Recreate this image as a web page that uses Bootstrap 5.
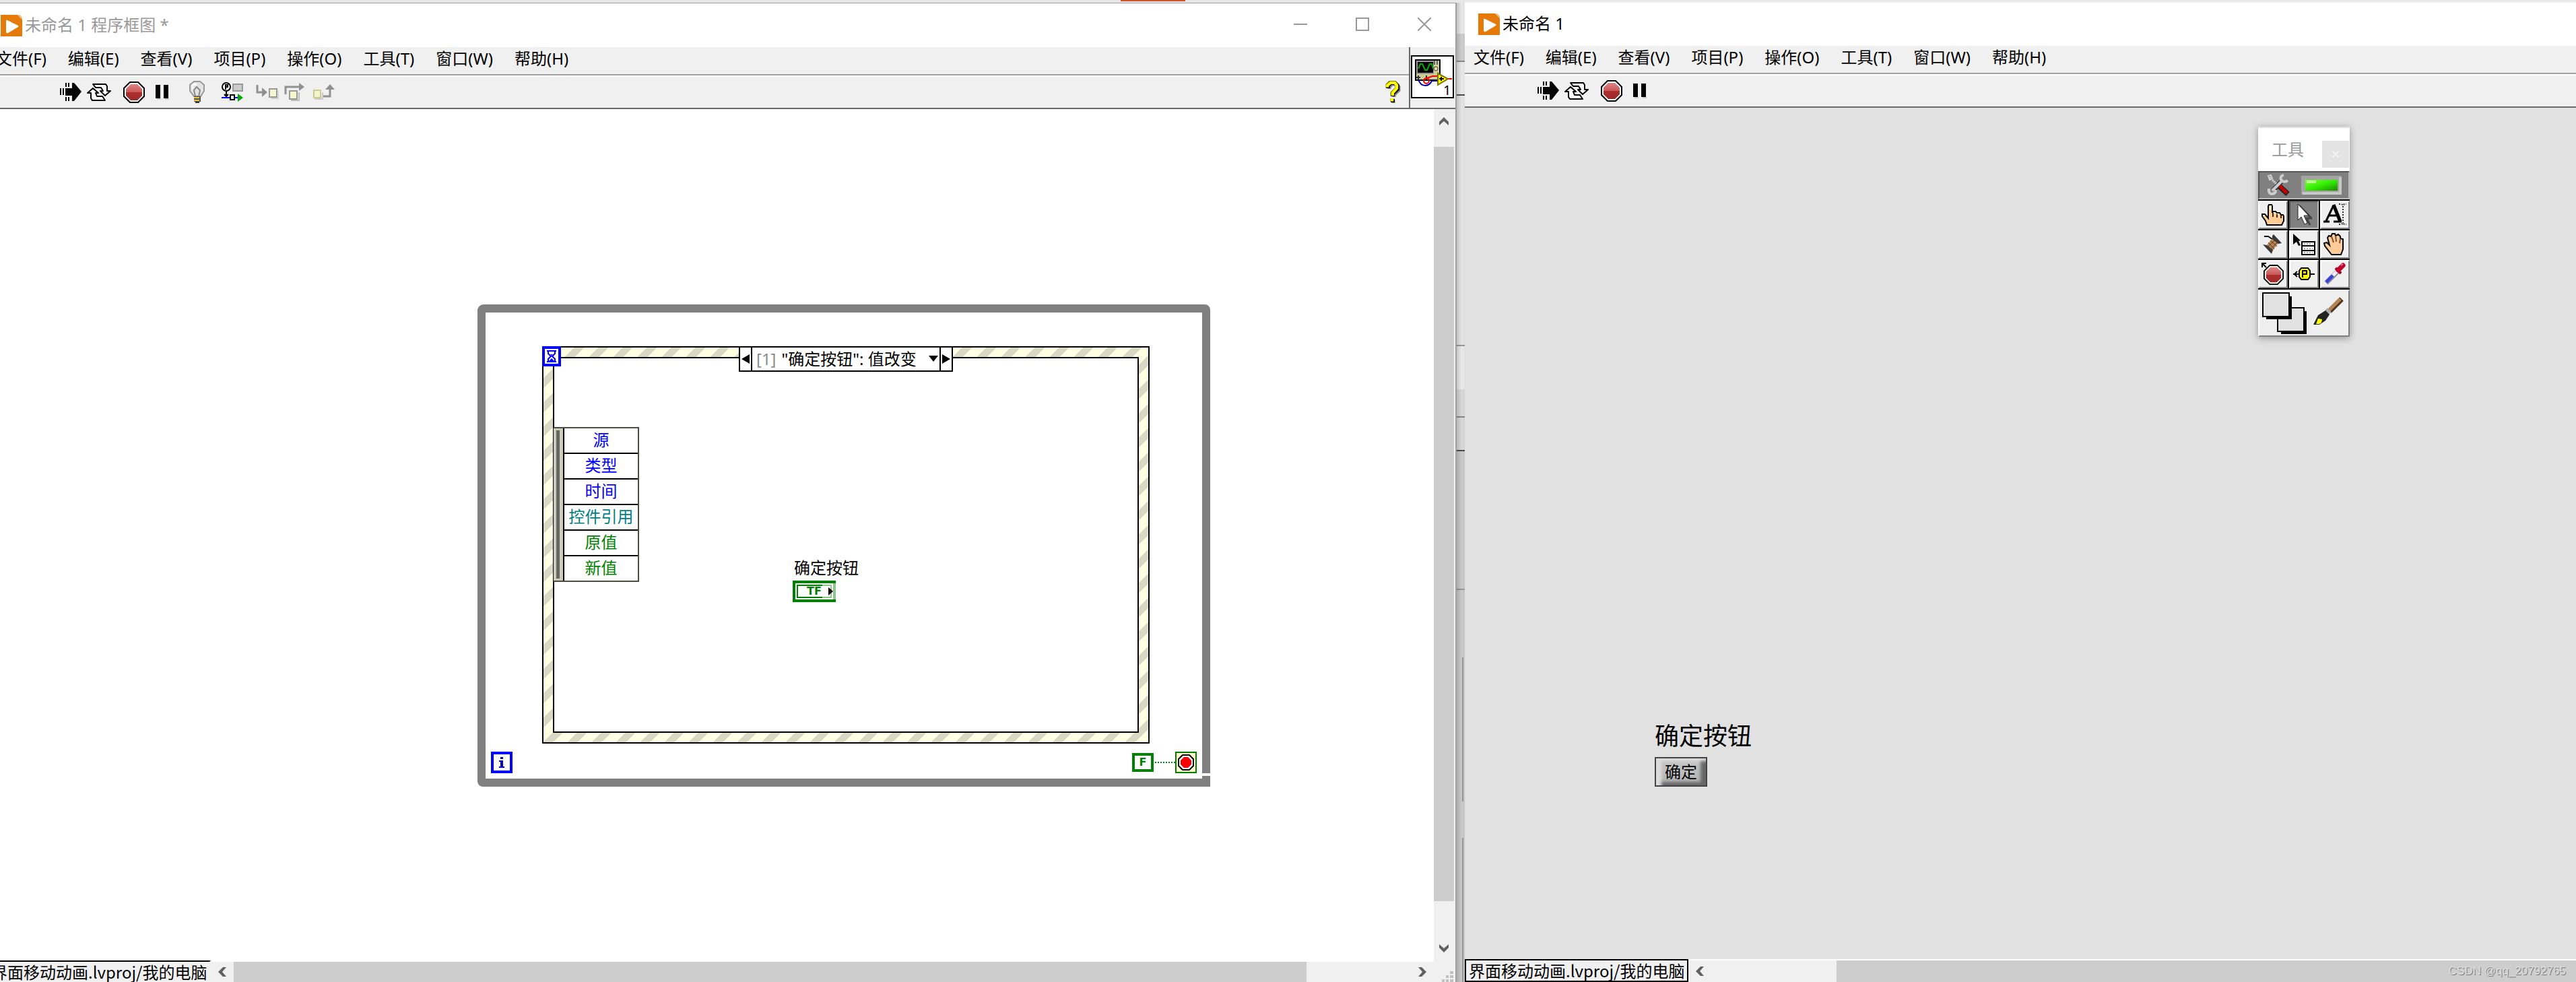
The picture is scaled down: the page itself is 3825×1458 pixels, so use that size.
<!DOCTYPE html>
<html lang="zh-CN">
<head>
<meta charset="utf-8">
<meta name="viewport" content="width=device-width, initial-scale=1">
<title>未命名 1 程序框图</title>
<link href="https://cdn.jsdelivr.net/npm/bootstrap@5.3.0/dist/css/bootstrap.min.css" rel="stylesheet">
<style>
  body { font-family: "Noto Sans", "Noto Sans CJK SC", sans-serif; font-size: 24px; line-height: 32px; color: #000; background: #e8e8e8; }
  button, select { font: inherit; color: inherit; border: 0; padding: 0; background: none; border-radius: 0; }
  svg { display: block; flex: none; }
  .desk-accent { left: 1664px; top: 0; width: 96px; height: 2px; background: #cd5527; }

  .win-diagram { flex: 2180 1 0; margin: 4px 0 0 -19px; border-top: 1px solid #a0a0a0; border-right: 2px solid #a0a0a0; background: #fff; }
  .win-panel { flex: 1650 1 0; margin-top: 2px; border-top: 2px solid #f0f0f0; background: #e1e1e1; }
  .win-title { height: 64px; background: #fff; padding-left: 20px; }
  .win-diagram .win-title { height: 65px; color: #999; }
  .win-title .app-name { margin-left: 4px; padding-bottom: 2px; }
  .win-ctl { width: 92px; height: 62px; color: #999; }
  .bar-zone { background: #f0f0f0; border-bottom: 2px solid #696969; }
  .menu-line { height: 42px; border-bottom: 2px solid #a0a0a0; padding: 0 13px; gap: 32px; }
  .menu-line a { color: #000; text-decoration: none; line-height: 34px; }
  .tool-line { height: 48px; border-top: 2px solid #fff; padding: 0 0 0 104px; gap: 12px; }
  .tool-set { display: flex; gap: 2px; }
  .tool-btn { width: 40px; height: 44px; display: flex; align-items: center; justify-content: center; }
  .vi-pane { width: 69px; border-left: 2px solid #696969; padding: 12px 1px 0 1px; }
  .vi-icon { width: 64px; height: 64px; }

  .scroll-v { width: 32px; background: #f0f0f0; }
  .scroll-v button { width: 30px; height: 36px; }
  .thumb-v { width: 30px; background: #cdcdcd; margin: 20px 0 52px; }
  .scroll-arrow { display: flex; align-items: center; justify-content: center; }
  .foot-line { background: #f0f0f0; }
  .win-diagram .foot-line { height: 32px; }
  .win-panel .foot-line { height: 34px; }
  .proj-path { border: 2px solid #000; background: #f0f0f0; font-family: "Noto Sans CJK SC", sans-serif; line-height: 30px; padding: 0 4px; height: 34px; }
  .win-diagram .proj-path { border-right-color: #f0f0f0; }
  .scroll-h { border-top: 2px solid #fff; }
  .scroll-h button { width: 34px; }
  .thumb-h { background: #cdcdcd; }
  .grip-corner { width: 32px; }

  .seam { flex: 0 0 12px; background:
      linear-gradient(90deg, rgba(0,0,0,.2), rgba(0,0,0,.05) 60%, rgba(0,0,0,.08)),
      linear-gradient(transparent 0 972px, #9ca09e 972px 1186px, transparent 1186px 1240px, #9ca09e 1240px) 8px 0 / 2px 100% no-repeat,
      linear-gradient(#f4f4f4 0 46px, #d8d8d8 46px 86px, #909090 86px 88px, #f4f4f4 88px 136px, #505050 136px 138px, #f0f0f0 138px 508px, #a0a0a0 508px 510px, #f6f6f6 510px 574px, #e4e4e4 574px 614px, #909090 614px 616px, #e4e4e4 616px 664px, #505050 664px 666px, #d4d4d4 666px 870px, #a0a0a0 870px 872px, #d4d4d4 872px); }

  .while-loop { left: 728px; top: 290px; width: 1088px; height: 716px; border: 12px solid #808080; border-radius: 9px 8px 0 8px; }
  .loop-notch { right: -12px; bottom: 4px; width: 14px; height: 4px; background: #fff; }
  .loop-index { left: 8px; bottom: 8px; }
  .loop-stop { right: 8px; bottom: 8px; }
  .const-f { width: 32px; height: 28px; border: 4px solid #008000; color: #008000; font: bold 16px/20px "DejaVu Sans", sans-serif; text-align: center; }
  .wire-dots { width: 32px; height: 2px; background: repeating-linear-gradient(90deg, #fff 0 2px, #008000 2px 4px); }
  .index-i { width: 32px; height: 32px; border: 4px solid #00f; }
  .stop-term { width: 32px; height: 32px; border: 2px solid #008000; background: #ffffcc; }

  .event-frame { left: 84px; top: 50px; width: 902px; height: 590px; border: 2px solid #000; padding: 14px;
    background: linear-gradient(135deg, #d8d8c4 0 22%, #ffffe4 22% 50%, #d8d8c4 50% 72%, #ffffe4 72%) 9px 0 / 36px 36px; }
  .event-body { border: 2px solid #000; background: #fff; }
  .hourglass { left: -2px; top: -2px; width: 28px; height: 30px; border: 4px solid #00f; background: #fff; }
  .case-bar { left: 290px; top: -2px; width: 318px; height: 38px; border: 2px solid #000; background: #fff; }
  .case-bar .case-step { width: 16px; }
  .case-bar .case-mid { border: solid #000; border-width: 0 2px; padding: 0 4px 0 6px; }
  .case-no { color: #8c8c8c; margin-right: 8px; }
  .case-mid select { appearance: none; -webkit-appearance: none; outline: 0; height: 32px; }
  .case-caret { right: 2px; top: 12px; pointer-events: none; }
  .event-data { left: 15px; top: 118px; height: 230px; width: 127px; border: 2px solid #4c4c40; border-left: 0; background: #fff; }
  .data-rail { width: 16px; background: #ccccb8; border-right: 2px solid #000; padding: 3px 5px 3px 4px; }
  .data-rail div { background: #666; }
  .event-data li { border-bottom: 2px solid #000; line-height: 34px; text-align: center; flex: 1 1 0; }
  .event-data li:last-child { border-bottom: 0; }
  .c-blue { color: #00f; } .c-teal { color: #008080; } .c-green { color: #008000; }
  .btn-node { left: 370px; top: 311px; }
  .btn-node .node-name { padding-left: 2px; }
  .tf-term { width: 64px; height: 32px; margin-top: 3px; border: 4px solid #008000; padding: 2px; }
  .tf-term .tf-in { border: 2px solid #008000; color: #008000; font: bold 16px/16px "DejaVu Sans", sans-serif; padding-left: 13px; height: 20px; }
  .tf-veil { right: -4px; top: 0; width: 20px; height: 24px; background: rgba(255,255,255,.55); }
  .tf-arrow { right: 0; top: 6px; }

  .ok-ctl { left: 282px; top: 911px; }
  .ok-ctl label { font-size: 36px; line-height: 44px; }
  .ok-btn { width: 78px; height: 44px; margin-top: 9px; border: 2px solid #444; background: linear-gradient(#c8c8c8, #b0b0b0); box-shadow: inset 8px 4px 4px #dcdcdc, inset -8px -5px 4px #686868; line-height: 40px; }

  .palette { right: 336px; top: 28px; width: 136px; background: #efefef; box-shadow: 0 2px 10px rgba(0,0,0,.35); }
  .pal-title { height: 66px; background: #fff; border-top: 2px solid #e0e0e0; color: #999; padding: 0 1px 0 20px; }
  .pal-close { width: 40px; height: 40px; background: #e3e3e3; margin-top: 19px; }
  .pal-auto { height: 42px; background: #808080; border: 2px solid; border-color: #555 #bbb #bbb #555; padding: 0 10px; }
  .pal-grid { display: grid; grid-template-columns: repeat(3, 1fr); gap: 2px; background: #000; padding: 2px 0; }
  .pal-grid button { height: 42px; background: #efefef; border: 2px solid; border-color: #fff #808080 #808080 #fff; display: flex; align-items: center; justify-content: center; }
  .pal-grid button.on { background: #808080; border-color: #555 #bbb #bbb #555; }
  .pal-color { height: 70px; border: 2px solid; border-color: #fff #808080 #808080 #fff; }
  .csdn { right: 15px; bottom: 6px; font: 17px/20px "Liberation Sans", Arial, sans-serif; color: #dedede; text-shadow: 1px 1px 0 #777; }
</style>
<script src="https://cdn.jsdelivr.net/npm/bootstrap@5.3.0/dist/js/bootstrap.bundle.min.js"></script>
</head>
<body class="vh-100 overflow-hidden position-relative">

<!-- shared symbols -->
<svg width="0" height="0" class="position-absolute" aria-hidden="true">
  <defs>
    <linearGradient id="gRed" x1="0" y1="0" x2="0" y2="1"><stop offset="0" stop-color="#e08484"/><stop offset=".5" stop-color="#c85858"/><stop offset=".5" stop-color="#b02c2c"/><stop offset="1" stop-color="#9c2c2c"/></linearGradient>
    <linearGradient id="gLed" x1="0" y1="0" x2="1" y2="1"><stop offset="0" stop-color="#7dff3a"/><stop offset=".5" stop-color="#33ee00"/><stop offset="1" stop-color="#1f8a00"/></linearGradient>
    <symbol id="lv" viewBox="0 0 32 32"><path fill="#e67a08" d="M0 0h25l7 7v25H0z"/><path fill="#f0b880" d="M25 0l7 7V4L28 0z"/><path fill="#fff" d="M8 9q0-2 2-1l16 8q1 1 0 2l-15 9q-3 1-3-2z"/></symbol>
    <symbol id="run" viewBox="0 0 32 28"><path d="M8 8h10V0h3l11 13-11 14h-3v-8H8z"/><path d="M0 8h2v10H0zM4 8h2v10H4zM8 0h2v6H8zM12 0h2v6h-2zM8 21h2v6H8zM12 21h2v6h-2z"/></symbol>
    <symbol id="loopy" viewBox="0 0 36 28"><g fill="#fff" stroke="#000" stroke-width="2" stroke-linejoin="round"><path d="M9 2h19l2 3v7h5l-8 7-7-7h4l-3-5h-8z"/><path d="M27 26H8l-2-3v-8H1l8-7 8 7h-4l2 5h8z"/></g></symbol>
    <symbol id="stop" viewBox="0 0 32 32"><path fill="#fff" stroke="#000" stroke-width="2" d="M10 1h12l9 9v12l-9 9H10l-9-9V10z"/><path fill="url(#gRed)" d="M11 4h10l7 7v10l-7 7H11l-7-7V11z"/></symbol>
    <symbol id="pause" viewBox="0 0 20 22"><path fill="#ccc" d="M2 20h6v2H2zM14 20h6v2h-6z"/><path d="M0 0h7v20H0zM12 0h7v20h-7z"/></symbol>
    <symbol id="chev" viewBox="0 0 14 12"><path fill="#606060" d="M7 0l7 7v5L7 6 0 12V7z"/></symbol>
  </defs>
</svg>

<div class="desk-accent position-absolute"></div>

<div class="d-flex h-100">

  <!-- block diagram window -->
  <section class="win-diagram d-flex flex-column">
    <header class="win-title d-flex align-items-center">
      <svg width="32" height="32"><use href="#lv"/></svg>
      <span class="app-name text-nowrap">未命名 1 程序框图 *</span>
      <div class="ms-auto d-flex align-self-start">
        <button class="win-ctl scroll-arrow" aria-label="最小化"><svg width="20" height="20"><path d="M0 10h20" stroke="#999" stroke-width="2"/></svg></button>
        <button class="win-ctl scroll-arrow" aria-label="最大化"><svg width="20" height="20"><path d="M1 1h18v18H1z" fill="none" stroke="#999" stroke-width="2"/></svg></button>
        <button class="win-ctl scroll-arrow" aria-label="关闭"><svg width="20" height="20"><path d="M0 0l20 20M20 0L0 20" stroke="#999" stroke-width="2"/></svg></button>
      </div>
    </header>

    <div class="bar-zone d-flex">
      <div class="flex-grow-1">
        <nav class="menu-line d-flex text-nowrap">
          <a href="#">文件(F)</a><a href="#">编辑(E)</a><a href="#">查看(V)</a><a href="#">项目(P)</a><a href="#">操作(O)</a><a href="#">工具(T)</a><a href="#">窗口(W)</a><a href="#">帮助(H)</a>
        </nav>
        <div class="tool-line d-flex align-items-center">
          <div class="tool-set">
            <button class="tool-btn" aria-label="运行"><svg width="32" height="28"><use href="#run"/></svg></button>
            <button class="tool-btn" aria-label="连续运行"><svg width="36" height="28"><use href="#loopy"/></svg></button>
          </div>
          <div class="tool-set">
            <button class="tool-btn" aria-label="中止执行"><svg width="32" height="32"><use href="#stop"/></svg></button>
            <button class="tool-btn" aria-label="暂停"><svg width="20" height="22"><use href="#pause"/></svg></button>
          </div>
          <button class="tool-btn" aria-label="高亮显示执行过程">
            <svg width="26" height="34" viewBox="0 0 26 34"><path d="M8 1h9l6 5v9l-5 8H8l-6-8V6z" fill="#e4e4e4" stroke="#999" stroke-width="2"/><path d="M6 4h6v3H7v5H5V6z" fill="#fff"/><path d="M12 9l5 5-2 9h-5l-2-9z" fill="none" stroke="#888" stroke-width="2"/><path d="M8 23h10v8H8z" fill="#555"/><path d="M8 24h8v2H8zM8 28h8v2H8z" fill="#f0c840"/><path d="M10 31h6v2h-6z" fill="#333"/></svg>
          </button>
          <button class="tool-btn" aria-label="保存连线值">
            <svg width="34" height="30" viewBox="0 0 34 30"><circle cx="8" cy="7" r="6" fill="#fff" stroke="#000" stroke-width="2"/><path d="M7 11V4h3v3H8" fill="none" stroke="#000" stroke-width="2"/><path d="M8 13v8M5 18l3 3 3-3" fill="none" stroke="#000" stroke-width="2"/><path d="M18 3h14v10H18z" fill="#ccc" stroke="#999" stroke-width="2"/><path d="M1 23h24" stroke="#00f" stroke-width="2"/><path d="M14 19h6v7h-6z" fill="#fff" stroke="#000" stroke-width="2"/><path d="M25 17l8 6-8 6z" fill="#0a0"/></svg>
          </button>
          <div class="tool-set">
            <button class="tool-btn" aria-label="单步步入"><svg width="34" height="22" viewBox="0 0 34 22"><path d="M2 0v11h8" fill="none" stroke="#909090" stroke-width="3"/><path d="M9 4l8 7-8 7z" fill="#909090"/><path d="M22 20h12V8" fill="none" stroke="#ccc" stroke-width="2"/><path d="M20 6h11v12H20z" fill="#f6f6cc" stroke="#999" stroke-width="2"/></svg></button>
            <button class="tool-btn" aria-label="单步步过"><svg width="34" height="28" viewBox="0 0 34 28"><path d="M2 17V6h20" fill="none" stroke="#909090" stroke-width="3"/><path d="M22 0l8 6-8 6z" fill="#909090"/><path d="M10 26h12V14" fill="none" stroke="#bbb" stroke-width="2"/><path d="M8 12h11v12H8z" fill="#f6f6cc" stroke="#999" stroke-width="2"/></svg></button>
            <button class="tool-btn" aria-label="单步步出"><svg width="34" height="24" viewBox="0 0 34 24"><path d="M16 18h10V6" fill="none" stroke="#909090" stroke-width="3"/><path d="M19 8l7-8 7 8z" fill="#909090"/><path d="M3 22h12V12" fill="none" stroke="#ccc" stroke-width="2"/><path d="M2 9h10v11H2z" fill="#f6f6cc" stroke="#cccc90" stroke-width="2"/></svg></button>
          </div>
          <button class="tool-btn ms-auto me-1" aria-label="即时帮助">
            <svg width="24" height="34" viewBox="0 0 24 34"><path d="M7 12V9l4-4h6l4 4v5l-7 7v3M13 28v5" fill="none" stroke="#888" stroke-width="5"/><path d="M5 11V7l4-4h6l4 4v5l-7 7v4M12 27v5" fill="none" stroke="#000" stroke-width="6"/><path d="M4 10V6l4-4h7l3 4v5l-7 7v4M11 26v5" fill="none" stroke="#808000" stroke-width="5"/><path d="M4 9V7l5-4h6l3 4v4l-6 7v4M11 26v4" fill="none" stroke="#ff0" stroke-width="4"/></svg>
          </button>
        </div>
      </div>
      <div class="vi-pane">
        <svg class="vi-icon" viewBox="0 0 64 64"><path d="M1 1h62v62H1z" fill="#fff" stroke="#000" stroke-width="2"/><path d="M7 7h36v30H7z" fill="#cccc99" stroke="#000" stroke-width="2"/><path d="M8 8h26v20H8z" fill="#999"/><path d="M10 10h23v16H10z"/><path d="M11 20l3-7h3l4 9h3l4-9h3l2 7" fill="none" stroke="#00b000" stroke-width="2"/><path d="M35 8v6M39 8v6" stroke="#666" stroke-width="2"/><circle cx="37" cy="20" r="3" fill="#f0d0b0" stroke="#444"/><path d="M11 30v6M8 33h6M23 30v6" stroke="#333" stroke-width="2"/><path d="M11 36q3 9 10 9 7 0 10-7h9" fill="none" stroke="#00a" stroke-width="2"/><circle cx="23" cy="38" r="4" fill="none" stroke="#f00" stroke-width="2"/><path d="M24 34l8-3h8M54 35h7" fill="none" stroke="#f00" stroke-width="2"/><path d="M40 27l15 8-15 9z" fill="#ff0" stroke="#777700" stroke-width="2"/><path d="M42 35h7M45 32v6" stroke="#000" stroke-width="2"/><text x="48" y="59" font-size="20" font-family="Noto Sans">1</text></svg>
      </div>
    </div>

    <div class="d-flex flex-grow-1">
      <main class="position-relative flex-grow-1">
        <div class="while-loop position-absolute">
          <div class="loop-notch position-absolute"></div>

          <div class="event-frame position-absolute d-flex">
            <div class="event-body flex-grow-1"></div>
            <div class="hourglass position-absolute"><svg width="20" height="22" viewBox="0 0 20 22"><path d="M3 3h14M3 19h14M5 4v3l4 4-4 4v3M15 4v3l-4 4 4 4v3" fill="none" stroke="#00f" stroke-width="2"/><path d="M6 18l4-4 4 4zM8 8h4l-2 2z" fill="#00f"/></svg></div>

            <div class="case-bar position-absolute d-flex">
              <button class="case-step scroll-arrow" aria-label="上一分支"><svg width="12" height="14"><path d="M12 0v14L0 7z"/></svg></button>
              <div class="case-mid position-relative flex-grow-1 d-flex align-items-center">
                <label class="case-no" for="evt">[1]</label>
                <select id="evt" class="flex-grow-1"><option>"确定按钮": 值改变</option></select>
                <svg class="case-caret position-absolute" width="14" height="9"><path d="M0 0h14L7 9z"/></svg>
              </div>
              <button class="case-step scroll-arrow" aria-label="下一分支"><svg width="12" height="14"><path d="M0 0v14l12-7z"/></svg></button>
            </div>

            <div class="event-data position-absolute d-flex">
              <div class="data-rail d-flex"><div class="flex-grow-1"></div></div>
              <ul class="list-unstyled m-0 flex-grow-1 d-flex flex-column">
                <li class="c-blue">源</li><li class="c-blue">类型</li><li class="c-blue">时间</li><li class="c-teal">控件引用</li><li class="c-green">原值</li><li class="c-green">新值</li>
              </ul>
            </div>

            <div class="btn-node position-absolute">
              <div class="node-name text-nowrap">确定按钮</div>
              <div class="tf-term position-relative"><div class="tf-in">TF</div>
                <div class="tf-veil position-absolute"></div>
                <svg class="tf-arrow position-absolute" width="7" height="12"><path d="M0 0l7 6-7 6z"/></svg>
              </div>
            </div>
          </div>

          <div class="loop-index index-i position-absolute"><svg width="24" height="24"><path d="M10 4h4v3h-4zM8 9h6v9h2v2H8v-2h2v-7H8z" fill="#0000c8"/></svg></div>
          <div class="loop-stop position-absolute d-flex align-items-center">
            <div class="const-f">F</div>
            <div class="wire-dots"></div>
            <div class="stop-term"><svg width="28" height="28"><path d="M9 3h10l6 6v10l-6 6H9l-6-6V9z" fill="#fff" stroke="#000" stroke-width="2"/><path d="M11 6h6l5 5v6l-5 5h-6l-5-5v-6z" fill="#f00"/></svg></div>
          </div>
        </div>
      </main>
      <div class="scroll-v d-flex flex-column">
        <button class="scroll-arrow" aria-label="向上"><svg width="14" height="12"><use href="#chev"/></svg></button>
        <div class="thumb-v flex-grow-1"></div>
        <button class="scroll-arrow" aria-label="向下"><svg width="14" height="12"><use href="#chev" transform="rotate(180 7 6)"/></svg></button>
      </div>
    </div>

    <footer class="foot-line d-flex">
      <div class="proj-path text-nowrap">界面移动动画.lvproj/我的电脑</div>
      <div class="scroll-h d-flex flex-grow-1">
        <button class="scroll-arrow" aria-label="向左"><svg width="12" height="14"><use href="#chev" width="14" height="12" transform="rotate(-90 7 7)"/></svg></button>
        <div class="d-flex flex-grow-1"><div class="thumb-h" style="flex:1594 1 0"></div><div style="flex:155 1 0"></div></div>
        <button class="scroll-arrow" aria-label="向右"><svg width="12" height="14"><use href="#chev" width="14" height="12" transform="rotate(90 6 6)"/></svg></button>
      </div>
      <div class="grip-corner"><svg width="32" height="32"><path fill="#c0c0c0" d="M24 16h5v4h-5zM24 22h5v4h-5zM18 22h4v4h-4zM24 28h5v4h-5zM18 28h4v4h-4zM12 28h4v4h-4z"/></svg></div>
    </footer>
  </section>

  <div class="seam mt-1"></div>

  <!-- front panel window -->
  <section class="win-panel d-flex flex-column position-relative">
    <header class="win-title d-flex align-items-center">
      <svg width="32" height="32"><use href="#lv"/></svg>
      <span class="app-name text-nowrap">未命名 1</span>
    </header>
    <div class="bar-zone">
      <nav class="menu-line d-flex text-nowrap">
        <a href="#">文件(F)</a><a href="#">编辑(E)</a><a href="#">查看(V)</a><a href="#">项目(P)</a><a href="#">操作(O)</a><a href="#">工具(T)</a><a href="#">窗口(W)</a><a href="#">帮助(H)</a>
      </nav>
      <div class="tool-line d-flex align-items-center">
        <div class="tool-set">
          <button class="tool-btn" aria-label="运行"><svg width="32" height="28"><use href="#run"/></svg></button>
          <button class="tool-btn" aria-label="连续运行"><svg width="36" height="28"><use href="#loopy"/></svg></button>
        </div>
        <div class="tool-set">
          <button class="tool-btn" aria-label="中止执行"><svg width="32" height="32"><use href="#stop"/></svg></button>
          <button class="tool-btn" aria-label="暂停"><svg width="20" height="22"><use href="#pause"/></svg></button>
        </div>
      </div>
    </div>

    <main class="position-relative flex-grow-1">
      <div class="ok-ctl position-absolute d-flex flex-column">
        <label for="ok" class="text-nowrap">确定按钮</label>
        <button id="ok" class="ok-btn">确定</button>
      </div>

      <aside class="palette position-absolute">
        <div class="pal-title d-flex align-items-center justify-content-between">
          <span>工具</span>
          <button class="pal-close scroll-arrow align-self-start" aria-label="关闭"><svg width="10" height="10"><path d="M0 0l10 10M10 0L0 10" stroke="#f4f4f4" stroke-width="2"/></svg></button>
        </div>
        <div class="pal-auto d-flex align-items-center justify-content-between">
          <svg width="36" height="34" viewBox="0 0 36 34"><path d="M5 5l14 14" stroke="#ddd" stroke-width="3" stroke-dasharray="2 1"/><path d="M3 3l4-1 2 5-4 2z" fill="none" stroke="#ccc" stroke-width="2"/><path d="M10 25L25 9" stroke="#333" stroke-width="7"/><path d="M9 25L25 9" stroke="#ccc" stroke-width="4"/><path d="M26 2q-6 1-4 7 4 5 10 1M4 22q-1 7 4 8 6 0 6-6" fill="none" stroke="#ccc" stroke-width="4"/><path d="M20 19l12 11" stroke="#222" stroke-width="8"/><path d="M20 18l11 11" stroke="#c00000" stroke-width="5"/></svg>
          <svg width="60" height="28"><path d="M0 0h60v28H0z" fill="#a4a4a4"/><path d="M56 2h4v26H2v-4h54z" fill="#c8c8c8"/><path d="M6 6h48v16H6z" fill="url(#gLed)"/><path d="M8 7h14v4H8z" fill="#b8ff90"/></svg>
        </div>
        <div class="pal-grid">
          <button aria-label="操作值"><svg width="34" height="34" viewBox="0 0 34 34"><path d="M8 32l-2-6-5-7v-3h4l5 6V4l1-2h4l1 2v10l1-2h4l2 2h4l2 3h3l1 2v7l-3 6z" fill="#ffcc99" stroke="#000" stroke-width="2"/><path d="M12 3h3v6h-3zM18 13h3v2h-3zM23 15h3v2h-3zM2 17h3v2H2z" fill="#ffffcc"/><path d="M17 14v6M23 16v5M29 18v4" stroke="#402810" stroke-width="2"/></svg></button>
          <button class="on" aria-label="定位/调整大小/选择"><svg width="24" height="34" viewBox="0 0 24 34"><path d="M5 3l18 19h-7l5 10" fill="none" stroke="#444" stroke-width="3"/><path d="M3 1l16 17h-7l5 11-4 2-5-11-5 5z" fill="#fff" stroke="#222"/></svg></button>
          <button aria-label="编辑文本"><svg width="36" height="34" viewBox="0 0 36 34"><path d="M1 27h9M16 27h12M5 26L16 3M9 18h12" fill="none" stroke="#000" stroke-width="3"/><path d="M16 2l10 25" stroke="#000" stroke-width="5"/><path d="M24 1h4l2 2 2-2h3M24 31h4l2-2 2 2h3M30 4v25" fill="none" stroke="#333" stroke-width="2" stroke-dasharray="2 2"/></svg></button>
          <button aria-label="进行连线"><svg width="32" height="30" viewBox="0 0 32 30"><path d="M3 3h6l6 4" fill="none" stroke="#000" stroke-width="2"/><path d="M16 5l8 8-10 13-8-9z" fill="#b88458"/><path d="M15 2l2-2 12 13-5 1-9-7zM1 15l6 1 9 7-2 6z" fill="#3a3a3a"/><path d="M9 12l9 10M12 9l10 9M8 19l11-11M12 23l10-11" stroke="#5c3c24" stroke-width="1"/></svg></button>
          <button aria-label="对象快捷菜单"><svg width="34" height="34" viewBox="0 0 34 34"><path d="M1 1l11 10-3 1 3 6-3 1-3-6-5 4z"/><path d="M14 13h19v19H14z" fill="#fff" stroke="#000" stroke-width="2"/><path d="M14 19h19M14 26h19" stroke="#000" stroke-width="2"/><path d="M17 16h13M17 23h13M17 29h13" stroke="#aaa" stroke-width="2" stroke-dasharray="2 2"/></svg></button>
          <button aria-label="滚动窗口"><svg width="34" height="34" viewBox="0 0 34 34"><path d="M12 32L2 19l-1-4 4-1 4 4-3-11 2-3 3 1 2-4h4l1 3 4-2 3 3v3l4 1v15l-3 8z" fill="#ffcc99" stroke="#000" stroke-width="2"/><path d="M12 5l3 9M18 4l1 9M25 8l-1 7" stroke="#805030" stroke-width="2"/></svg></button>
          <button aria-label="设置/清除断点"><svg width="34" height="34" viewBox="0 0 34 34"><path d="M1 7V1h6M1 1l6 6" fill="none" stroke="#000" stroke-width="2"/><svg x="3" y="3" width="30" height="30"><use href="#stop"/></svg></svg></button>
          <button aria-label="探针数据"><svg width="34" height="22" viewBox="0 0 34 22"><path d="M1 11h32M7 7l-4 4 4 4" fill="none" stroke="#000" stroke-width="2"/><path d="M13 2h10l3 4v9l-3 4H13l-3-4V6z" fill="#ff0" stroke="#000" stroke-width="2"/><path d="M15 16V6h6v5h-6" fill="none" stroke="#000" stroke-width="2"/></svg></button>
          <button aria-label="获取颜色"><svg width="34" height="34" viewBox="0 0 34 34"><path d="M4 30L21 13" stroke="#888" stroke-width="7"/><path d="M4 29L21 12" stroke="#eef" stroke-width="5"/><path d="M4 29l10-10" stroke="#3344dd" stroke-width="5"/><path d="M18 8l8 8" stroke="#a00020" stroke-width="4"/><path d="M22 11l7-7" stroke="#c00028" stroke-width="7" stroke-linecap="round"/><path d="M26 4l3-2" stroke="#ff8090" stroke-width="2"/></svg></button>
        </div>
        <div class="pal-color d-flex">
          <svg width="132" height="66" viewBox="0 0 132 66"><path d="M32 30h38v34H32z"/><path d="M27 25h39v35H27z" fill="#e1e1e1" stroke="#000" stroke-width="2"/><path d="M10 8h38v34H10z"/><path d="M5 3h39v35H5z" fill="#e1e1e1" stroke="#000" stroke-width="2"/><path d="M104 30l18-18" stroke="#4c3420" stroke-width="8"/><path d="M103 29l17-17" stroke="#b48454" stroke-width="5"/><path d="M99 27l6 6" stroke="#aaa" stroke-width="5"/><path d="M80 50l7-14 11-7 6 6-6 9-9 6z" fill="#222"/><path d="M84 49l3-8 6 1-1 5-3 2z" fill="#ff0"/></svg>
        </div>
      </aside>
    </main>

    <footer class="foot-line d-flex position-relative">
      <div class="proj-path text-nowrap">界面移动动画.lvproj/我的电脑</div>
      <div class="scroll-h d-flex flex-grow-1">
        <button class="scroll-arrow" aria-label="向左"><svg width="12" height="14"><use href="#chev" width="14" height="12" transform="rotate(-90 7 7)"/></svg></button>
        <div class="d-flex flex-grow-1 pb-0"><div style="flex:185 1 0"></div><div class="thumb-h" style="flex:1097 1 0"></div></div>
      </div>
      <div class="csdn position-absolute">CSDN @qq_20792765</div>
    </footer>
  </section>
</div>
</body>
</html>
